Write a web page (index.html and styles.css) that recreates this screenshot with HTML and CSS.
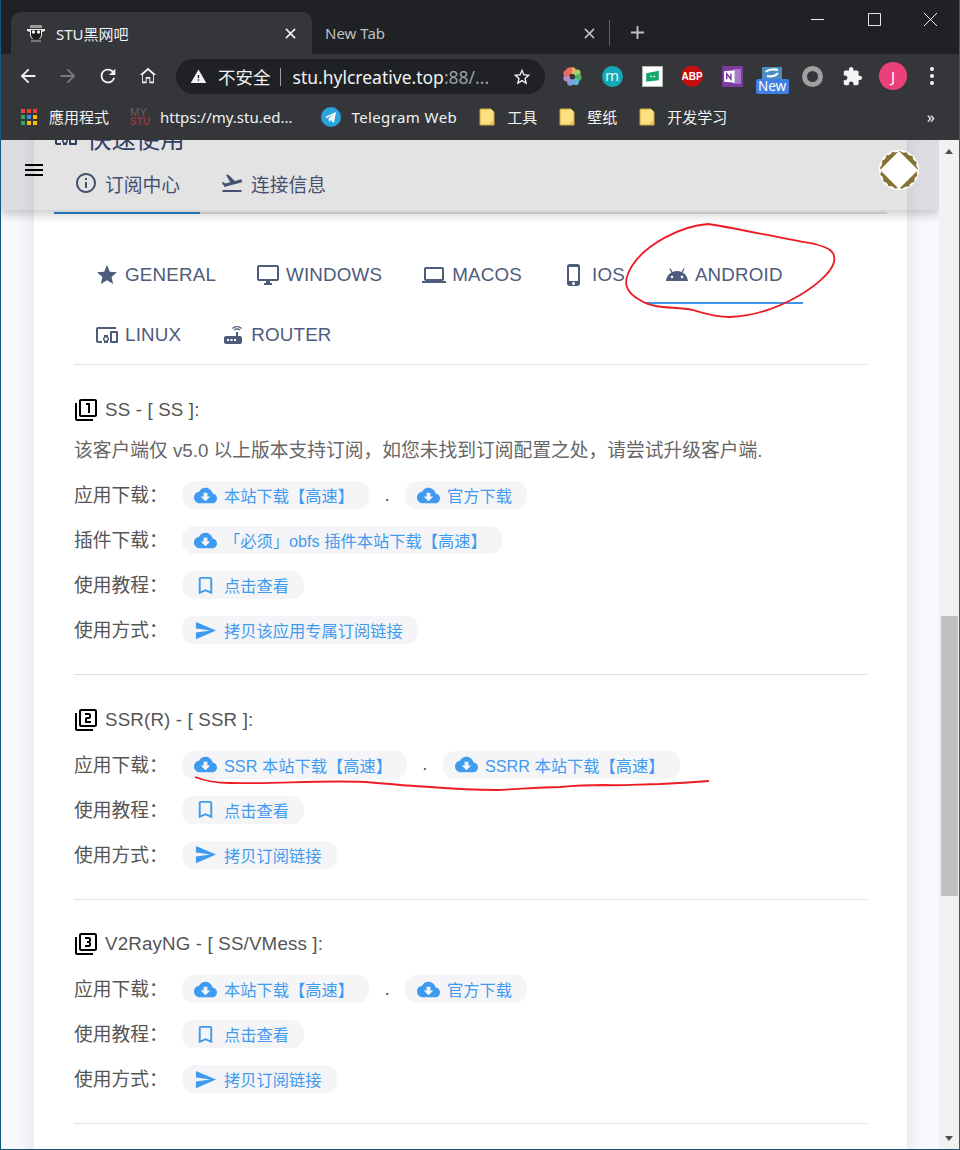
FILE: index.html
```html
<!DOCTYPE html>
<html lang="zh-CN">
<head>
<meta charset="UTF-8">
<meta name="viewport" content="width=device-width, initial-scale=1.0">
<title>STU黑网吧</title>
<link rel="stylesheet" href="styles.css">
</head>
<body>
<svg class="sprite" width="0" height="0" aria-hidden="true">
    <defs>
        <symbol id="i-star" viewBox="0 0 24 24"><path d="M12 17.27L18.18 21l-1.64-7.03L22 9.24l-7.19-.61L12 2 9.19 8.63 2 9.24l5.46 4.73L5.82 21z"/></symbol>
        <symbol id="i-desktop" viewBox="0 0 24 24"><path d="M21 2H3c-1.1 0-2 .9-2 2v12c0 1.1.9 2 2 2h7v2H8v2h8v-2h-2v-2h7c1.1 0 2-.9 2-2V4c0-1.1-.9-2-2-2zm0 14H3V4h18v12z"/></symbol>
        <symbol id="i-laptop" viewBox="0 0 24 24"><path d="M20 18c1.1 0 1.99-.9 1.99-2L22 6c0-1.1-.9-2-2-2H4c-1.1 0-2 .9-2 2v10c0 1.1.9 2 2 2H0v2h24v-2h-4zM4 6h16v10H4V6z"/></symbol>
        <symbol id="i-phone" viewBox="0 0 24 24"><path d="M15.5 1h-8C6.12 1 5 2.12 5 3.5v17C5 21.88 6.12 23 7.5 23h8c1.38 0 2.5-1.12 2.5-2.5v-17C18 2.12 16.88 1 15.5 1zm-4 21c-.83 0-1.5-.67-1.5-1.5s.67-1.5 1.5-1.5 1.5.67 1.5 1.5-.67 1.5-1.5 1.5zm4.5-4H7V4h9v14z"/></symbol>
        <symbol id="i-android" viewBox="0 0 24 24"><path d="M17.6 9.48l1.84-3.18c.16-.31.04-.69-.26-.85-.29-.15-.65-.06-.83.22l-1.88 3.24c-2.86-1.21-6.08-1.21-8.94 0L5.65 5.67c-.19-.29-.58-.38-.87-.2-.28.18-.37.54-.22.83L6.4 9.48C3.3 11.25 1.28 14.44 1 18h22c-.28-3.56-2.3-6.75-5.4-8.52zM7 15.25c-.69 0-1.25-.56-1.25-1.25s.56-1.25 1.25-1.25 1.25.56 1.25 1.25-.56 1.25-1.25 1.25zm10 0c-.69 0-1.25-.56-1.25-1.25s.56-1.25 1.25-1.25 1.25.56 1.25 1.25-.56 1.25-1.25 1.25z"/></symbol>
        <symbol id="i-devices" viewBox="0 0 24 24"><path d="M3 6h18V4H3c-1.1 0-2 .9-2 2v12c0 1.1.9 2 2 2h4v-2H3V6zm10 6H9v1.78c-.61.55-1 1.33-1 2.22s.39 1.67 1 2.22V20h4v-1.78c.61-.55 1-1.34 1-2.22s-.39-1.67-1-2.22V12zm-2 5.5c-.83 0-1.5-.67-1.5-1.5s.67-1.5 1.5-1.5 1.5.67 1.5 1.5-.67 1.5-1.5 1.5zM22 8h-6c-.5 0-1 .5-1 1v10c0 .5.5 1 1 1h6c.5 0 1-.5 1-1V9c0-.5-.5-1-1-1zm-1 10h-4v-8h4v8z"/></symbol>
        <symbol id="i-router" viewBox="0 0 24 24"><path d="M20.2 5.9l.8-.8C19.6 3.7 17.8 3 16 3s-3.6.7-5 2.1l.8.8C13 4.8 14.5 4.2 16 4.2s3 .6 4.2 1.7zm-.9.8c-.9-.9-2.1-1.4-3.3-1.4s-2.4.5-3.3 1.4l.8.8c.7-.7 1.6-1 2.5-1 .9 0 1.8.3 2.5 1l.8-.8zM19 13h-2V9h-2v4H5c-1.1 0-2 .9-2 2v4c0 1.1.9 2 2 2h14c1.1 0 2-.9 2-2v-4c0-1.1-.9-2-2-2zM8 18H6v-2h2v2zm3.5 0h-2v-2h2v2zm3.5 0h-2v-2h2v2z"/></symbol>
        <symbol id="i-info" viewBox="0 0 24 24"><path d="M11 7h2v2h-2zm0 4h2v6h-2zm1-9C6.48 2 2 6.48 2 12s4.48 10 10 10 10-4.48 10-10S17.52 2 12 2zm0 18c-4.41 0-8-3.59-8-8s3.59-8 8-8 8 3.59 8 8-3.59 8-8 8z"/></symbol>
        <symbol id="i-flight" viewBox="0 0 24 24"><path d="M2.5 19h19v2h-19zm19.57-9.36c-.21-.8-1.04-1.28-1.84-1.06L14.92 10l-6.9-6.43-1.93.51 4.14 7.17-4.97 1.33-1.97-1.54-1.45.39 1.82 3.16.77 1.33 1.6-.43 5.31-1.42 4.35-1.16L21 11.49c.81-.23 1.28-1.05 1.07-1.85z"/></symbol>
        <symbol id="i-cloud" viewBox="0 0 24 24"><path d="M19.35 10.04C18.67 6.59 15.64 4 12 4 9.11 4 6.6 5.64 5.35 8.04 2.34 8.36 0 10.91 0 14c0 3.31 2.69 6 6 6h13c2.76 0 5-2.24 5-5 0-2.64-2.05-4.78-4.65-4.96zM17 13l-5 5-5-5h3V9h4v4h3z"/></symbol>
        <symbol id="i-bookmark" viewBox="0 0 24 24"><path d="M17 3H7c-1.1 0-1.99.9-1.99 2L5 21l7-3 7 3V5c0-1.1-.9-2-2-2zm0 15l-5-2.18L7 18V5h10v13z"/></symbol>
        <symbol id="i-send" viewBox="0 0 24 24"><path d="M2.01 21L23 12 2.01 3 2 10l15 2-15 2z"/></symbol>
        <symbol id="i-filter1" viewBox="0 0 24 24"><path d="M3 5H1v16c0 1.1.9 2 2 2h16v-2H3V5zm11 10h2V5h-4v2h2v8zm7-14H7c-1.1 0-2 .9-2 2v14c0 1.1.9 2 2 2h14c1.1 0 2-.9 2-2V3c0-1.1-.9-2-2-2zm0 16H7V3h14v14z"/></symbol>
        <symbol id="i-filter2" viewBox="0 0 24 24"><path d="M3 5H1v16c0 1.1.9 2 2 2h16v-2H3V5zm18-4H7c-1.1 0-2 .9-2 2v14c0 1.1.9 2 2 2h14c1.1 0 2-.9 2-2V3c0-1.1-.9-2-2-2zm0 16H7V3h14v14zm-4-4h-4v-2h2c1.1 0 2-.89 2-2V7c0-1.11-.9-2-2-2h-4v2h4v2h-2c-1.1 0-2 .89-2 2v4h6v-2z"/></symbol>
        <symbol id="i-filter3" viewBox="0 0 24 24"><path d="M21 1H7c-1.1 0-2 .9-2 2v14c0 1.1.9 2 2 2h14c1.1 0 2-.9 2-2V3c0-1.1-.9-2-2-2zm0 16H7V3h14v14zM3 5H1v16c0 1.1.9 2 2 2h16v-2H3V5zm14 8v-1.5c0-.83-.67-1.5-1.5-1.5.83 0 1.5-.67 1.5-1.5V7c0-1.11-.9-2-2-2h-4v2h4v2h-2v2h2v2h-4v2h4c1.1 0 2-.89 2-2z"/></symbol>
        <symbol id="i-folder" viewBox="0 0 16 18"><path d="M1 1h11l3 3v13H1z" fill="#fde07f" stroke="#c9a83f"/><path d="M11.5 13.5H15V17h-3.5z" fill="#e3c25a"/></symbol>
        <symbol id="i-close" viewBox="0 0 12 12"><path d="M1 1l10 10M11 1L1 11" stroke-width="1.7" fill="none"/></symbol>
    </defs>
</svg>

<div class="window">
    <!-- browser chrome -->
    <header class="chrome">
        <div class="tabstrip">
            <div class="tab tab-active">
                <svg class="favicon" viewBox="0 0 20 20"><path d="M4 2h12v3H4z" fill="#9a9a9a"/><path d="M1 6h18v2l-3 1v4l-2 3H6l-2-3V9L1 8z" fill="#e8e8e8"/><path d="M5 7h10v6l-2 3H7l-2-3z" fill="#1c1c1c"/><circle cx="7.5" cy="9" r="1.7" fill="#fff"/><circle cx="12.5" cy="9" r="1.7" fill="#fff"/><path d="M5 17h10v2H5z" fill="#777"/></svg>
                <span class="tab-title">STU黑网吧</span>
                <svg class="tab-close"><use href="#i-close"/></svg>
            </div>
            <div class="tab tab-idle">
                <span class="tab-title">New Tab</span>
                <svg class="tab-close"><use href="#i-close"/></svg>
            </div>
            <span class="tab-sep"></span>
            <svg class="newtab" viewBox="0 0 16 16"><path d="M8 1v14M1 8h14" stroke="#bdc1c6" stroke-width="2"/></svg>
            <div class="win-controls">
                <svg viewBox="0 0 14 14"><path d="M0 7h14" stroke="#fff"/></svg>
                <svg viewBox="0 0 14 14"><path d="M.5 .5h13v13H.5z" fill="none" stroke="#fff"/></svg>
                <svg viewBox="0 0 14 14"><path d="M0 0l14 14M14 0L0 14" stroke="#fff"/></svg>
            </div>
        </div>

        <div class="toolbar">
            <svg class="nav-icon" viewBox="0 0 24 24"><path d="M20 11H7.83l5.59-5.59L12 4l-8 8 8 8 1.41-1.41L7.83 13H20z" fill="#f1f3f4"/></svg>
            <svg class="nav-icon" viewBox="0 0 24 24"><path d="M12 4l-1.41 1.41L16.17 11H4v2h12.17l-5.58 5.59L12 20l8-8z" fill="#77797c"/></svg>
            <svg class="nav-icon" viewBox="0 0 24 24"><path d="M17.65 6.35A7.96 7.96 0 0 0 12 4a8 8 0 1 0 7.73 10h-2.08A6 6 0 1 1 12 6c1.66 0 3.14.69 4.22 1.78L13 11h7V4z" fill="#f1f3f4"/></svg>
            <svg class="nav-icon" viewBox="0 0 24 24"><path d="M12 5.7l5.5 4.9V18h-3v-5h-5v5h-3v-7.4zM12 3L3 11h2.5v9h5v-5h3v5h5v-9H21z" fill="#f1f3f4"/></svg>
            <div class="omnibox">
                <svg class="warn" viewBox="0 0 24 24"><path d="M1 21h22L12 2zm12-3h-2v-2h2zm0-4h-2v-4h2z" fill="#f1f3f4"/></svg>
                <span class="insecure">不安全</span>
                <span class="omni-sep"></span>
                <span class="url">stu.hylcreative.top<span class="url-dim">:88/...</span></span>
                <svg class="omni-star" viewBox="0 0 24 24"><path d="M22 9.24l-7.19-.62L12 2 9.19 8.63 2 9.24l5.46 4.73L5.82 21 12 17.27 18.18 21l-1.63-7.03zM12 15.4l-3.76 2.27 1-4.28-3.32-2.88 4.38-.38L12 6.1l1.71 4.04 4.38.38-3.32 2.88 1 4.28z" fill="#f1f3f4"/></svg>
            </div>
            <div class="extensions">
                <span class="ext">
                    <svg class="ext-svg" viewBox="0 0 20 20">
                        <circle cx="10" cy="4.5" r="3.2" fill="#f6b26b"/><circle cx="14.5" cy="6.5" r="3.2" fill="#a6d36a"/><circle cx="15.5" cy="11" r="3.2" fill="#57b45a"/><circle cx="13" cy="15" r="3.2" fill="#5bb8d8"/><circle cx="8" cy="15.5" r="3.2" fill="#7e9fe0"/><circle cx="4.5" cy="11.5" r="3.2" fill="#b58ad0"/><circle cx="4.5" cy="7" r="3.2" fill="#e56a6a"/><circle cx="7" cy="4.5" r="3" fill="#f0705a"/>
                    </svg>
                </span>
                <span class="ext"><span class="ext-m">m</span></span>
                <span class="ext">
                    <svg class="ext-svg" viewBox="0 0 20 20"><path d="M.5 .5h19v19H.5z" fill="#fff" stroke="#b8b8b8"/><path d="M4 7l12-2.5v9L4 15z" fill="#12a66b"/><path d="M8 10h1.5M11 10h1.5" stroke="#fff" stroke-width="1.4"/></svg>
                </span>
                <span class="ext"><span class="ext-abp">ABP</span></span>
                <span class="ext">
                    <svg class="ext-svg" viewBox="0 0 20 20"><path d="M0 0h20v20H0z" fill="#7e3a9e"/><path d="M11 3h7v14h-7z" fill="#a77cc4"/><path d="M2 5l10-1v12L2 15z" fill="#fff"/><path d="M4.5 12.5v-5l4 5v-5" stroke="#7e3a9e" stroke-width="1.4" fill="none"/></svg>
                </span>
                <span class="ext ext-stack">
                    <svg class="ext-s" viewBox="0 0 20 12"><path d="M0 0h20v12H0z" fill="#4a8ec2"/><path d="M4 5c2-3 9-3 12-2M5 9c4 1 9 0 11-3" stroke="#fff" stroke-width="2.2" fill="none"/></svg>
                    <span class="ext-new">New</span>
                </span>
                <span class="ext"><span class="ext-ring"></span></span>
                <span class="ext">
                    <svg class="ext-svg" viewBox="0 0 24 24"><path d="M20.5 11H19V7c0-1.1-.9-2-2-2h-4V3.5C13 2.12 11.88 1 10.5 1S8 2.12 8 3.5V5H4c-1.1 0-1.99.9-1.99 2v3.8H3.5c1.49 0 2.7 1.21 2.7 2.7s-1.21 2.7-2.7 2.7H2V20c0 1.1.9 2 2 2h3.8v-1.5c0-1.49 1.21-2.7 2.7-2.7 1.49 0 2.7 1.21 2.7 2.7V22H17c1.1 0 2-.9 2-2v-4h1.5c1.38 0 2.5-1.12 2.5-2.5S21.88 11 20.5 11z" fill="#f1f3f4"/></svg>
                </span>
                <span class="ext"><span class="avatar">J</span></span>
                <span class="ext"><span class="kebab"><i></i><i></i><i></i></span></span>
            </div>
        </div>

        <div class="bookmarks">
            <a class="bm bm-apps"><span class="apps-grid"><i class="g-r"></i><i class="g-r"></i><i class="g-r"></i><i class="g-g"></i><i class="g-b"></i><i class="g-o"></i><i class="g-g"></i><i class="g-o"></i><i class="g-o"></i></span>應用程式</a>
            <a class="bm bm-my"><span class="my-logo"><b>MY</b><b class="my-stu">STU</b></span>https://my.stu.ed...</a>
            <a class="bm bm-tg">
                <svg class="tg" viewBox="0 0 20 20"><circle cx="10" cy="10" r="10" fill="#2aa3dd"/><path d="M4 10l11-5-2 11-3.5-3-1.5 2-.5-3.5 5-4.5-6.5 4z" fill="#fff"/></svg>
                Telegram Web
            </a>
            <a class="bm bm-folder"><svg class="folder"><use href="#i-folder"/></svg>工具</a>
            <a class="bm bm-folder"><svg class="folder"><use href="#i-folder"/></svg>壁纸</a>
            <a class="bm bm-folder"><svg class="folder"><use href="#i-folder"/></svg>开发学习</a>
            <span class="bm-more">»</span>
        </div>
    </header>

    <div class="viewport">
        <main class="page">
            <div class="card">
                <div class="card-title">
                    <svg class="title-icon" viewBox="0 0 24 24"><use href="#i-devices"/></svg>
                    <span>快速使用</span>
                </div>
                <div class="main-tabs">
                    <a class="main-tab main-tab-on"><svg class="ic24"><use href="#i-info"/></svg>订阅中心</a>
                    <a class="main-tab"><svg class="ic24"><use href="#i-flight"/></svg>连接信息</a>
                </div>

                <div class="card-body">
                    <nav class="os-tabs">
                        <a class="os-tab"><svg class="ic24"><use href="#i-star"/></svg>GENERAL</a>
                        <a class="os-tab"><svg class="ic24"><use href="#i-desktop"/></svg>WINDOWS</a>
                        <a class="os-tab"><svg class="ic24"><use href="#i-laptop"/></svg>MACOS</a>
                        <a class="os-tab"><svg class="ic24"><use href="#i-phone"/></svg>IOS</a>
                        <a class="os-tab os-tab-on"><svg class="ic24"><use href="#i-android"/></svg>ANDROID</a>
                        <a class="os-tab"><svg class="ic24"><use href="#i-devices"/></svg>LINUX</a>
                        <a class="os-tab"><svg class="ic24"><use href="#i-router"/></svg>ROUTER</a>
                    </nav>

                    <section class="client">
                        <h4 class="client-name"><svg class="ic24 ic-black"><use href="#i-filter1"/></svg>SS - [ SS ]:</h4>
                        <p class="client-note">该客户端仅 v5.0 以上版本支持订阅，如您未找到订阅配置之处，请尝试升级客户端.</p>
                        <div class="row">
                            <span class="row-label">应用下载：</span>
                            <a class="btn"><svg class="btn-ic"><use href="#i-cloud"/></svg>本站下载【高速】</a>
                            <span class="dot">.</span>
                            <a class="btn"><svg class="btn-ic"><use href="#i-cloud"/></svg>官方下载</a>
                        </div>
                        <div class="row">
                            <span class="row-label">插件下载：</span>
                            <a class="btn"><svg class="btn-ic"><use href="#i-cloud"/></svg>「必须」obfs 插件本站下载【高速】</a>
                        </div>
                        <div class="row">
                            <span class="row-label">使用教程：</span>
                            <a class="btn"><svg class="btn-ic"><use href="#i-bookmark"/></svg>点击查看</a>
                        </div>
                        <div class="row">
                            <span class="row-label">使用方式：</span>
                            <a class="btn"><svg class="btn-ic"><use href="#i-send"/></svg>拷贝该应用专属订阅链接</a>
                        </div>
                    </section>

                    <section class="client">
                        <h4 class="client-name"><svg class="ic24 ic-black"><use href="#i-filter2"/></svg>SSR(R) - [ SSR ]:</h4>
                        <div class="row">
                            <span class="row-label">应用下载：</span>
                            <a class="btn"><svg class="btn-ic"><use href="#i-cloud"/></svg>SSR 本站下载【高速】</a>
                            <span class="dot">.</span>
                            <a class="btn"><svg class="btn-ic"><use href="#i-cloud"/></svg>SSRR 本站下载【高速】</a>
                        </div>
                        <div class="row">
                            <span class="row-label">使用教程：</span>
                            <a class="btn"><svg class="btn-ic"><use href="#i-bookmark"/></svg>点击查看</a>
                        </div>
                        <div class="row">
                            <span class="row-label">使用方式：</span>
                            <a class="btn"><svg class="btn-ic"><use href="#i-send"/></svg>拷贝订阅链接</a>
                        </div>
                    </section>

                    <section class="client">
                        <h4 class="client-name"><svg class="ic24 ic-black"><use href="#i-filter3"/></svg>V2RayNG - [ SS/VMess ]:</h4>
                        <div class="row">
                            <span class="row-label">应用下载：</span>
                            <a class="btn"><svg class="btn-ic"><use href="#i-cloud"/></svg>本站下载【高速】</a>
                            <span class="dot">.</span>
                            <a class="btn"><svg class="btn-ic"><use href="#i-cloud"/></svg>官方下载</a>
                        </div>
                        <div class="row">
                            <span class="row-label">使用教程：</span>
                            <a class="btn"><svg class="btn-ic"><use href="#i-bookmark"/></svg>点击查看</a>
                        </div>
                        <div class="row">
                            <span class="row-label">使用方式：</span>
                            <a class="btn"><svg class="btn-ic"><use href="#i-send"/></svg>拷贝订阅链接</a>
                        </div>
                    </section>
                </div>
            </div>

            <!-- translucent app bar sits over the scrolled page -->
            <div class="appbar">
                <svg class="menu" viewBox="0 0 24 24"><path d="M3 18h18v-2H3v2zm0-5h18v-2H3v2zm0-7v2h18V6H3z"/></svg>
                <svg class="site-logo" viewBox="0 0 40 40"><circle cx="20" cy="20" r="20" fill="#fff"/><circle cx="20" cy="20" r="19" fill="#857036" stroke="#fff" stroke-width="2" stroke-dasharray="4 3"/><path d="M20 1l19 19-19 19L1 20z" fill="#fff"/></svg>
            </div>

            <!-- hand drawn red marks on the screenshot -->
            <svg class="scribble" viewBox="0 0 941 1010">
                <path d="M708 84C725 86 790 100 815 104C830 108 836 112 834 122C830 140 780 175 730 177C715 177 700 172 693 170C675 166 655 170 640 160C625 152 622 142 632 126C645 105 680 86 708 84Z"/>
                <path d="M195 637C205 641 218 643 230 643C275 644 320 640 365 642C390 644 410 646 430 647C455 649 475 650 497 650C520 649 540 647 560 647C580 645 590 645 606 645C625 646 640 644 660 644C680 643 695 642 709 641"/>
            </svg>
        </main>

        <div class="scrollbar">
            <span class="sb-arrow sb-up"></span>
            <div class="sb-track"><div class="sb-thumb"></div></div>
            <span class="sb-arrow sb-down"></span>
        </div>
    </div>
</div>
</body>
</html>
```

FILE: styles.css
```css
* {
    box-sizing: border-box;
}
html, body {
    margin: 0;
    padding: 0;
}
body {
    width: 960px;
    height: 1150px;
    overflow: hidden;
    font-family: "Liberation Sans", "Noto Sans CJK SC", sans-serif;
    background-color: #fff;
}
.sprite {
    position: absolute;
}
.window {
    height: 1150px;
    display: flex;
    flex-direction: column;
    border-left: 1px solid #0f5a78;
    border-right: 1px solid #4a5560;
    border-bottom: 1px solid #1a4f6e;
}

/* browser chrome */
.chrome {
    height: 140px;
    flex: none;
    background-color: #35363a;
    font-family: "Noto Sans", "Noto Sans CJK SC", sans-serif;
    color: #f1f3f4;
}
.tabstrip {
    height: 54px;
    display: flex;
    align-items: flex-end;
    background-color: #202124;
    padding-left: 10px;
}
.tab {
    height: 42px;
    display: flex;
    align-items: center;
    font-size: 15px;
}
.tab-active {
    width: 301px;
    padding: 0 16px 0 15px;
    background-color: #35363a;
    border-radius: 10px 10px 0 0;
    color: #f1f3f4;
}
.tab-idle {
    width: 297px;
    padding: 0 14px 0 13px;
    color: #bdc1c6;
}
.favicon {
    width: 20px;
    height: 20px;
    margin-right: 10px;
}
.tab-title {
    flex: 1;
}
.tab-close {
    width: 11px;
    height: 11px;
    stroke: #f1f3f4;
}
.tab-idle .tab-close {
    stroke: #bdc1c6;
}
.tab-sep {
    width: 1px;
    height: 26px;
    margin-bottom: 8px;
    background-color: #5f6368;
}
.newtab {
    width: 15px;
    height: 15px;
    margin: 0 0 14px 20px;
}
.win-controls {
    margin-left: auto;
    margin-right: 22px;
    align-self: flex-start;
    display: flex;
    gap: 43.5px;
    height: 39px;
    align-items: center;
}
.win-controls svg {
    width: 13px;
    height: 13px;
}

.toolbar {
    height: 44px;
    display: flex;
    align-items: center;
    padding-left: 16px;
}
.nav-icon {
    width: 22px;
    height: 22px;
    margin-right: 18px;
    flex: none;
}
.omnibox {
    width: 369px;
    height: 35px;
    margin: 1px 0 0 -1px;
    display: flex;
    align-items: center;
    flex: none;
    padding: 0 13px 0 14px;
    background-color: #202124;
    border-radius: 18px;
    font-size: 17.5px;
}
.warn {
    width: 17px;
    height: 17px;
    margin-right: 11px;
}
.omni-sep {
    width: 1px;
    height: 18px;
    margin: 0 12px 0 9px;
    background-color: #9aa0a6;
}
.url {
    flex: 1;
    white-space: nowrap;
}
.url-dim {
    color: #9aa0a6;
}
.omni-star {
    width: 20px;
    height: 20px;
}
.extensions {
    display: flex;
    align-items: center;
    margin-left: 7px;
}
.ext {
    width: 40px;
    height: 32px;
    display: flex;
    align-items: center;
    justify-content: center;
}
.ext-svg {
    width: 21px;
    height: 21px;
}
.ext-m {
    width: 21px;
    height: 21px;
    border-radius: 50%;
    background-color: #12a8b8;
    color: #e6fbff;
    font-size: 15px;
    line-height: 19px;
    text-align: center;
}
.ext-abp {
    width: 21px;
    height: 21px;
    background-color: #c70d0d;
    clip-path: polygon(30% 0, 70% 0, 100% 30%, 100% 70%, 70% 100%, 30% 100%, 0 70%, 0 30%);
    color: #fff;
    font: bold 10px/21px "Liberation Sans", sans-serif;
    text-align: center;
}
.ext-stack {
    flex-direction: column;
    justify-content: flex-start;
    padding-top: 7px;
}
.ext-s {
    width: 20px;
    height: 12px;
    display: block;
    flex: none;
}
.ext-new {
    width: 33px;
    height: 15px;
    flex: none;
    background-color: #3f7fe6;
    border-radius: 2px;
    color: #fff;
    font-size: 13.5px;
    line-height: 15px;
    text-align: center;
}
.ext-ring {
    width: 21px;
    height: 21px;
    border: 5px solid #a0a0a0;
    border-radius: 50%;
}
.avatar {
    width: 28px;
    height: 28px;
    margin-left: 2px;
    flex: none;
    border-radius: 50%;
    background-color: #ec407a;
    color: #fff;
    font-size: 15px;
    line-height: 28px;
    text-align: center;
}
.kebab {
    display: flex;
    flex-direction: column;
    gap: 3px;
}
.kebab i {
    width: 4px;
    height: 4px;
    border-radius: 50%;
    background-color: #f1f3f4;
}

.bookmarks {
    height: 42px;
    display: flex;
    align-items: center;
    padding: 0 0 5px 20px;
    font-size: 15px;
}
.bm {
    display: flex;
    align-items: center;
    white-space: nowrap;
}
.apps-grid {
    width: 16px;
    height: 16px;
    margin-right: 12px;
    display: grid;
    grid-template-columns: repeat(3, 4px);
    gap: 2px;
}
.apps-grid i {
    height: 4px;
}
.g-r { background-color: #ea4335; }
.g-g { background-color: #34a853; }
.g-b { background-color: #4285f4; }
.g-o { background-color: #fbbc04; }
.bm-my {
    margin-left: 21px;
}
.my-logo {
    width: 20px;
    margin-right: 10px;
    display: flex;
    flex-direction: column;
    font: 11.5px/10px "Liberation Sans", sans-serif;
    color: #6a5c5c;
}
.my-logo b {
    font-weight: normal;
}
.my-logo .my-stu {
    font-size: 10px;
    font-weight: bold;
    color: #8d3a44;
}
.bm-tg {
    margin-left: 29px;
    letter-spacing: .4px;
}
.tg {
    width: 20px;
    height: 20px;
    margin-right: 10px;
}
.bm-folder {
    margin-left: 22px;
}
.folder {
    width: 16px;
    height: 18px;
    margin-right: 12px;
}
.bm-more {
    margin-left: auto;
    margin-right: 24px;
    font-size: 16px;
}

/* page */
.viewport {
    flex: 1;
    display: flex;
    min-height: 0;
}
.page {
    position: relative;
    flex: 1;
    min-width: 0;
    overflow: hidden;
    padding: 0 32px 0 33px;
    background-color: #f8f9ff;
}
.card {
    background-color: #fff;
    margin-top: -20px;
    padding: 0 20px;
    color: #555;
    box-shadow: 0 0 20px rgba(0, 0, 0, 0.1);
}
.card-title {
    height: 34px;
    display: flex;
    align-items: center;
    gap: 9px;
    font-size: 24.4px;
    color: #34466e;
}
.title-icon {
    width: 24px;
    height: 24px;
    fill: #34466e;
}
.main-tabs {
    height: 60px;
    display: flex;
    border-bottom: 2px solid #e0e0e0;
}
.main-tab {
    display: flex;
    align-items: center;
    gap: 7px;
    height: 60px;
    padding: 0 20px 2px;
    color: #4d5b7c;
    font-size: 18.75px;
}
.main-tab-on {
    box-shadow: inset 0 -2px 0 #2e82cc;
}
.ic24 {
    width: 24px;
    height: 24px;
    flex: none;
    fill: #4d5b7c;
}
.ic-black {
    fill: #000;
}
.card-body {
    padding: 30px 20px 40px;
}
.os-tabs {
    display: flex;
    flex-wrap: wrap;
    padding-left: 1px;
    padding-right: 60px;
    border-bottom: 1px solid #e0e0e0;
}
.os-tab {
    height: 60px;
    display: flex;
    align-items: center;
    gap: 6px;
    padding: 1px 20px 0;
    color: #4d5b7c;
    font-size: 18.75px;
    letter-spacing: .2px;
}
.os-tab-on {
    box-shadow: inset 0 -2px 0 #3e97ea;
}
.client {
    padding: 29.5px 0 22px;
    border-bottom: 1px solid #e0e0e0;
}
.client-name {
    height: 30px;
    margin: 0 0 7px;
    display: flex;
    align-items: center;
    gap: 7px;
    font-size: 18.75px;
    font-weight: normal;
    color: #555;
    letter-spacing: .15px;
}
.client-note {
    height: 38px;
    margin: 1px 0 2.5px;
    font-size: 18.75px;
    line-height: 38px;
    color: #666;
}
.row {
    height: 45px;
    display: flex;
    align-items: center;
    font-size: 18.75px;
    color: #555;
}
.row-label {
    width: 108px;
    flex: none;
    margin-top: -2px;
}
.btn {
    height: 28px;
    display: flex;
    align-items: center;
    padding: 0 15px 0 12px;
    gap: 7px;
    margin-top: 1px;
    background-color: #f5f5f7;
    border-radius: 12px;
    color: #3f9bf0;
    font-size: 16.25px;
    white-space: nowrap;
}
.btn-ic {
    width: 23px;
    height: 23px;
    fill: #3f9bf0;
}
.dot {
    width: 36px;
    text-align: center;
}

/* overlays */
.appbar {
    position: absolute;
    left: 0;
    right: 0;
    top: 0;
    height: 70px;
    background-color: rgba(0, 0, 0, 0.11);
    box-shadow: 0 4px 10px rgba(0, 0, 0, 0.22);
}
.menu {
    position: absolute;
    left: 21px;
    top: 18px;
    width: 24px;
    height: 24px;
    fill: #000;
}
.site-logo {
    position: absolute;
    left: 878px;
    top: 10px;
    width: 40px;
    height: 40px;
}
.scribble {
    position: absolute;
    left: -1px;
    top: 0;
    width: 941px;
    height: 1010px;
    fill: none;
    stroke: #ed1c24;
    stroke-width: 1.8;
    pointer-events: none;
}

/* scrollbar */
.scrollbar {
    width: 20px;
    flex: none;
    display: flex;
    flex-direction: column;
    align-items: stretch;
    background-color: #f1f1f1;
}
.sb-arrow {
    height: 17px;
    flex: none;
    position: relative;
}
.sb-up::after,
.sb-down::after {
    content: "";
    position: absolute;
    left: 6px;
    border-left: 4.5px solid transparent;
    border-right: 4.5px solid transparent;
}
.sb-up::after {
    top: 9px;
    border-bottom: 5px solid #505050;
}
.sb-down::after {
    top: 4px;
    border-top: 5px solid #505050;
}
.sb-track {
    flex: 1;
    padding: 459px 0 0 2px;
}
.sb-thumb {
    height: 280px;
    width: 17px;
    background-color: #c1c1c1;
}
```
